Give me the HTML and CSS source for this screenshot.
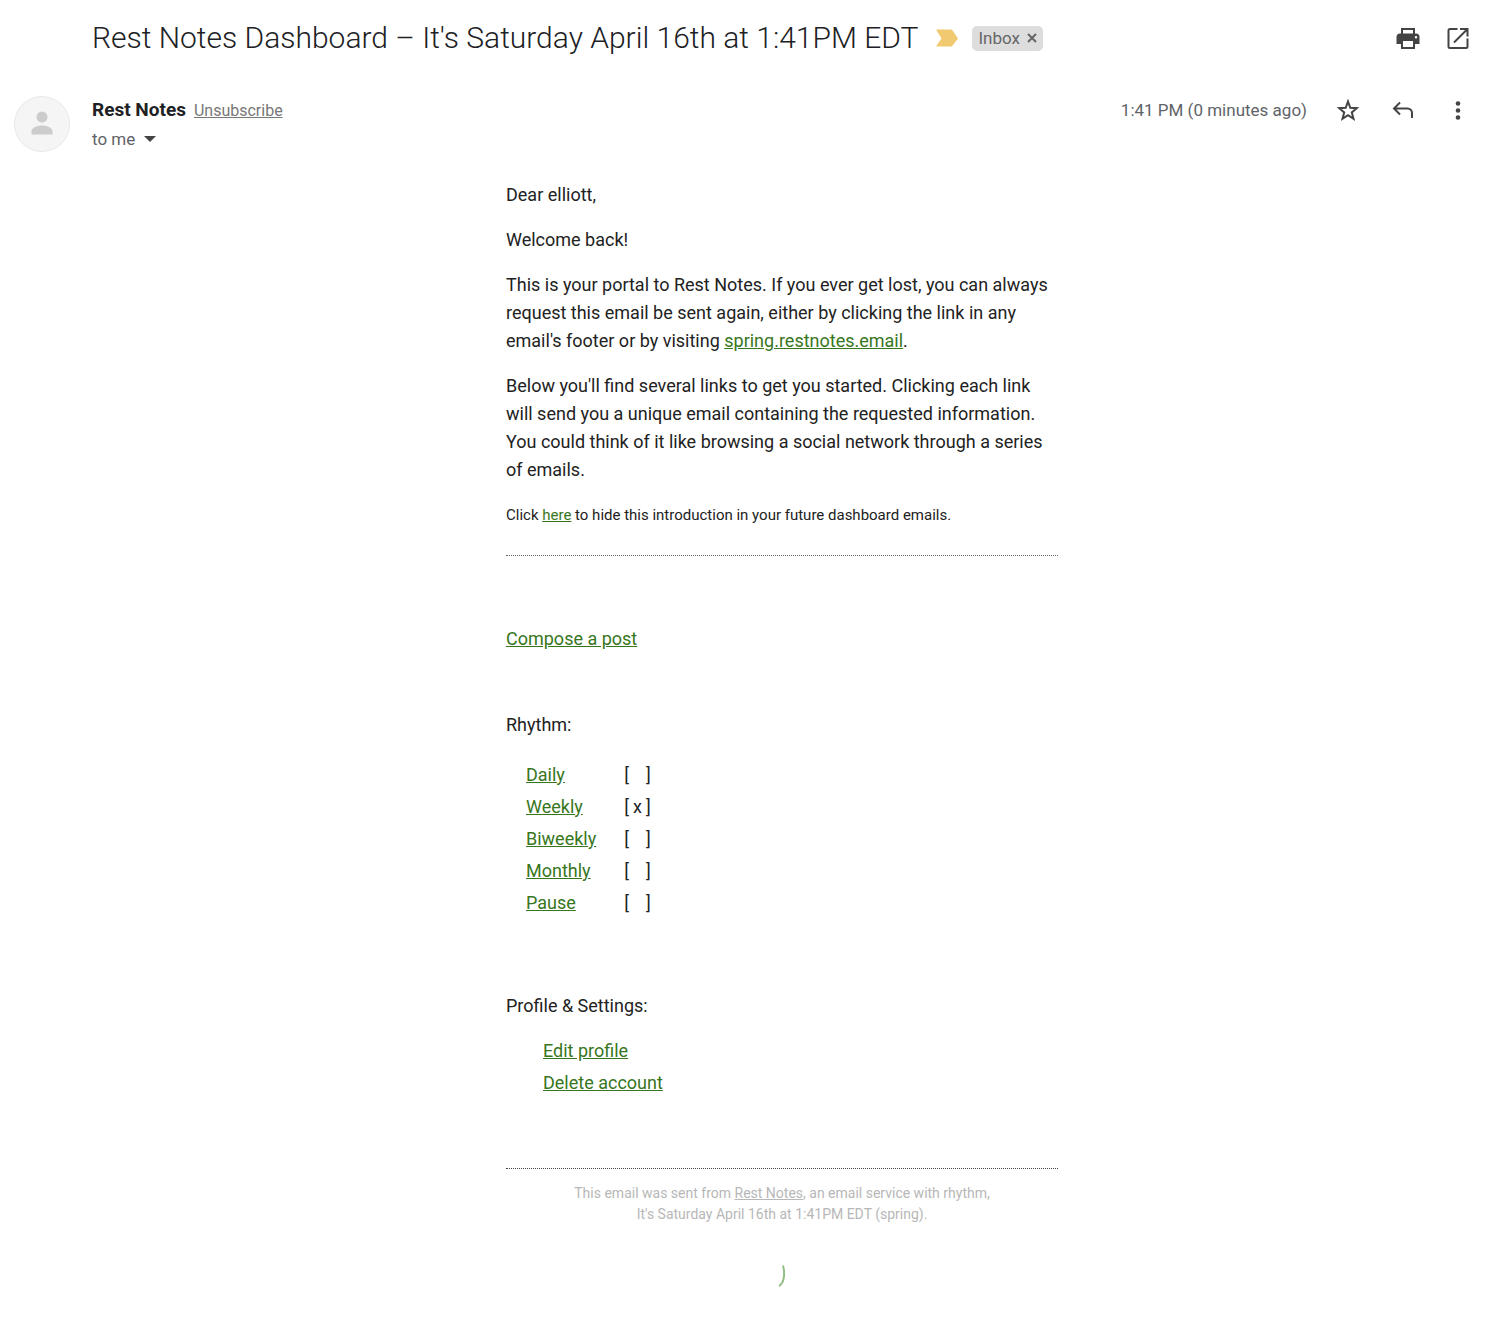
FILE: index.html
```html
<!DOCTYPE html>
<html lang="en">
<head>
  <meta charset="UTF-8" />
  <meta name="viewport" content="width=device-width, initial-scale=1.0" />
  <title>Rest Notes Dashboard</title>
  <link rel="stylesheet" href="styles.css">
</head>
<body>
  <header class="subject">
    <h1>Rest Notes Dashboard – It's Saturday April 16th at 1:41PM EDT</h1>
    <svg class="important" viewBox="0 0 22 18" aria-hidden="true">
      <path d="M0 .500h14.500q1.500 0 2.300 1.200L22 9.500l-5.200 6.800Q16 17.500 14.500 17.500H0l5.500-8z" />
    </svg>
    <div class="label">
      <span>Inbox</span>
      <button type="button" aria-label="Remove label">
        <svg viewBox="0 0 10 10"><path d="M1 1l8 8M9 1L1 9" /></svg>
      </button>
    </div>
    <div class="actions">
      <button type="button" class="icon" aria-label="Print all">
        <svg viewBox="0 0 28 28"><path d="M22 9.500h-1V4H7v5.500H6a3.500 3.500 0 0 0-3.500 3.500v7H7v5h14v-5h4.500v-7A3.500 3.500 0 0 0 22 9.500zM9 6h10v3.500H9V6zm10 17H9v-6h10v6zm3-8.500a1.200 1.200 0 1 1 0-2.400 1.200 1.200 0 0 1 0 2.400z" fill-rule="evenodd" /></svg>
      </button>
      <button type="button" class="icon" aria-label="Open in new window">
        <svg viewBox="0 0 28 28"><path class="line" d="M13.500 5H6a1.500 1.500 0 0 0-1.500 1.500v16A1.500 1.500 0 0 0 6 24h16a1.500 1.500 0 0 0 1.500-1.500v-8M16 5h7.500v7.500M23 5.500L10 18.500" /></svg>
      </button>
    </div>
  </header>

  <section class="sender">
    <svg class="avatar" viewBox="0 0 56 56" aria-hidden="true">
      <circle class="ring" cx="28" cy="28" r="27.500" />
      <circle class="person" cx="28" cy="21" r="5.500" />
      <path class="person" d="M17.500 38.500v-3c0-4 6-6 10.500-6s10.500 2 10.500 6v3z" />
    </svg>
    <div class="from">
      <div class="name"><strong>Rest Notes</strong><a href="#unsubscribe">Unsubscribe</a></div>
      <button type="button" class="details">to me
        <svg viewBox="0 0 12 6" aria-hidden="true"><path d="M0 0h12L6 6z" /></svg>
      </button>
    </div>
    <div class="tools">
      <time>1:41 PM (0 minutes ago)</time>
      <button type="button" class="icon" aria-label="Star">
        <svg viewBox="0 0 28 28"><path class="line" d="M14 5.500l2.300 6.300 6.500.400-5 4.200 1.700 6.400-5.500-3.600-5.500 3.600 1.700-6.400-5-4.200 6.500-.400z" /></svg>
      </button>
      <button type="button" class="icon" aria-label="Reply">
        <svg viewBox="0 0 28 28"><path class="line" d="M11 6.500l-6 6 6 6M5 12.500h13.500a4.500 4.500 0 0 1 4.500 4.500v5" /></svg>
      </button>
      <button type="button" class="icon" aria-label="More">
        <svg viewBox="0 0 28 28"><circle cx="14" cy="7.500" r="2.300" /><circle cx="14" cy="14.500" r="2.300" /><circle cx="14" cy="21.500" r="2.300" /></svg>
      </button>
    </div>
  </section>

  <main class="message">
    <div class="intro">
      <p>Dear elliott,</p>
      <p>Welcome back!</p>
      <p>This is your portal to Rest Notes. If you ever get lost, you can always request this email be sent again, either by clicking the link in any email's footer or by visiting <a href="#spring">spring.restnotes.email</a>.</p>
      <p>Below you'll find several links to get you started. Clicking each link will send you a unique email containing the requested information. You could think of it like browsing a social network through a series of emails.</p>
      <p class="small">Click <a href="#hide">here</a> to hide this introduction in your future dashboard emails.</p>
    </div>

    <p class="compose"><a href="#compose">Compose a post</a></p>

    <p>Rhythm:</p>
    <table class="rhythm">
      <tr><td><a href="#daily">Daily</a></td><td>[<span class="mark"></span>]</td></tr>
      <tr><td><a href="#weekly">Weekly</a></td><td>[<span class="mark">x</span>]</td></tr>
      <tr><td><a href="#biweekly">Biweekly</a></td><td>[<span class="mark"></span>]</td></tr>
      <tr><td><a href="#monthly">Monthly</a></td><td>[<span class="mark"></span>]</td></tr>
      <tr><td><a href="#pause">Pause</a></td><td>[<span class="mark"></span>]</td></tr>
    </table>

    <p>Profile &amp; Settings:</p>
    <ul class="settings">
      <li><a href="#profile">Edit profile</a></li>
      <li><a href="#delete">Delete account</a></li>
    </ul>

    <footer>
      This email was sent from <a href="#restnotes">Rest Notes</a>, an email service with rhythm,<br>
      It's Saturday April 16th at 1:41PM EDT (spring).
      <svg class="blade" viewBox="0 0 8 22" aria-hidden="true"><path d="M5 0.500C7 8 6.500 18 1 21" /></svg>
    </footer>
  </main>
</body>
</html>
```

FILE: styles.css
```css
body {
  margin: 0;
  padding: 16px 28px 28px 14px;
  background: #fff;
  color: #222;
  font-family: Roboto, "Liberation Sans", sans-serif;
  font-size: 18px;
  line-height: 28px;
}
button {
  padding: 0;
  border: 0;
  background: none;
  color: inherit;
  font: inherit;
  cursor: pointer;
}
svg {
  display: block;
}
.subject {
  display: flex;
  align-items: center;
  padding-left: 78px;
}
.subject h1 {
  margin: 0;
  font-size: 30px;
  font-weight: 300;
  line-height: 44px;
  color: #202124;
}
.important {
  width: 22px;
  height: 18px;
  margin: 0 14px 0 18px;
  fill: #f0c971;
}
.label {
  display: flex;
  align-items: center;
  gap: 7px;
  padding: 0 6px;
  border-radius: 5px;
  background: #ddd;
  color: #666;
  font-size: 17px;
  line-height: 25px;
}
.label svg {
  width: 10px;
  height: 10px;
  fill: none;
  stroke: #666;
  stroke-width: 2;
}
.actions {
  display: flex;
  gap: 22px;
  margin-left: auto;
}
.icon svg {
  width: 28px;
  height: 28px;
  fill: #444;
}
.icon .line {
  fill: none;
  stroke: #444;
  stroke-width: 2;
}
.sender {
  display: flex;
  align-items: flex-start;
  gap: 22px;
  padding-top: 36px;
}
.avatar {
  width: 56px;
  height: 56px;
}
.ring {
  fill: #f5f5f5;
  stroke: #e8e8e8;
}
.person {
  fill: #ccc;
}
.from {
  color: #5f6368;
  font-size: 17px;
}
.name {
  display: flex;
  align-items: baseline;
  gap: 8px;
}
.from strong {
  color: #202124;
  font-size: 19px;
}
.from a {
  color: #777;
  font-size: 16px;
}
.details {
  display: flex;
  align-items: center;
  gap: 9px;
}
.details svg {
  width: 12px;
  height: 6px;
  fill: #444;
}
.tools {
  display: flex;
  align-items: center;
  gap: 27px;
  margin-left: auto;
  color: #5f6368;
  font-size: 17px;
}
.message {
  max-width: 552px;
  margin: 0 auto;
  padding: 28px 0 0 78px;
}
.message a {
  color: #38761d;
}
.message p {
  margin: 0 0 17px;
}
.intro {
  padding-bottom: 9px;
  border-bottom: 1px dotted #666;
}
.intro .small {
  font-size: 15px;
}
.message .compose {
  margin: 69px 0 58px;
}
.rhythm {
  margin: 20px 0 73px 20px;
  border-spacing: 0;
}
.rhythm td {
  padding: 2px 28px 2px 0;
}
.mark {
  display: inline-block;
  width: 17px;
  text-align: center;
}
.settings {
  margin: 0;
  padding: 0 0 67px 37px;
  border-bottom: 1px dotted #444;
  list-style: none;
}
.settings li {
  margin-bottom: 4px;
}
footer {
  padding-top: 14px;
  color: #b7b7b7;
  font-size: 14px;
  line-height: 21px;
  text-align: center;
}
.message footer a {
  color: #b7b7b7;
}
.blade {
  width: 8px;
  height: 22px;
  margin: 40px auto 0;
  fill: none;
  stroke: #93bd86;
  stroke-width: 2;
}
```
